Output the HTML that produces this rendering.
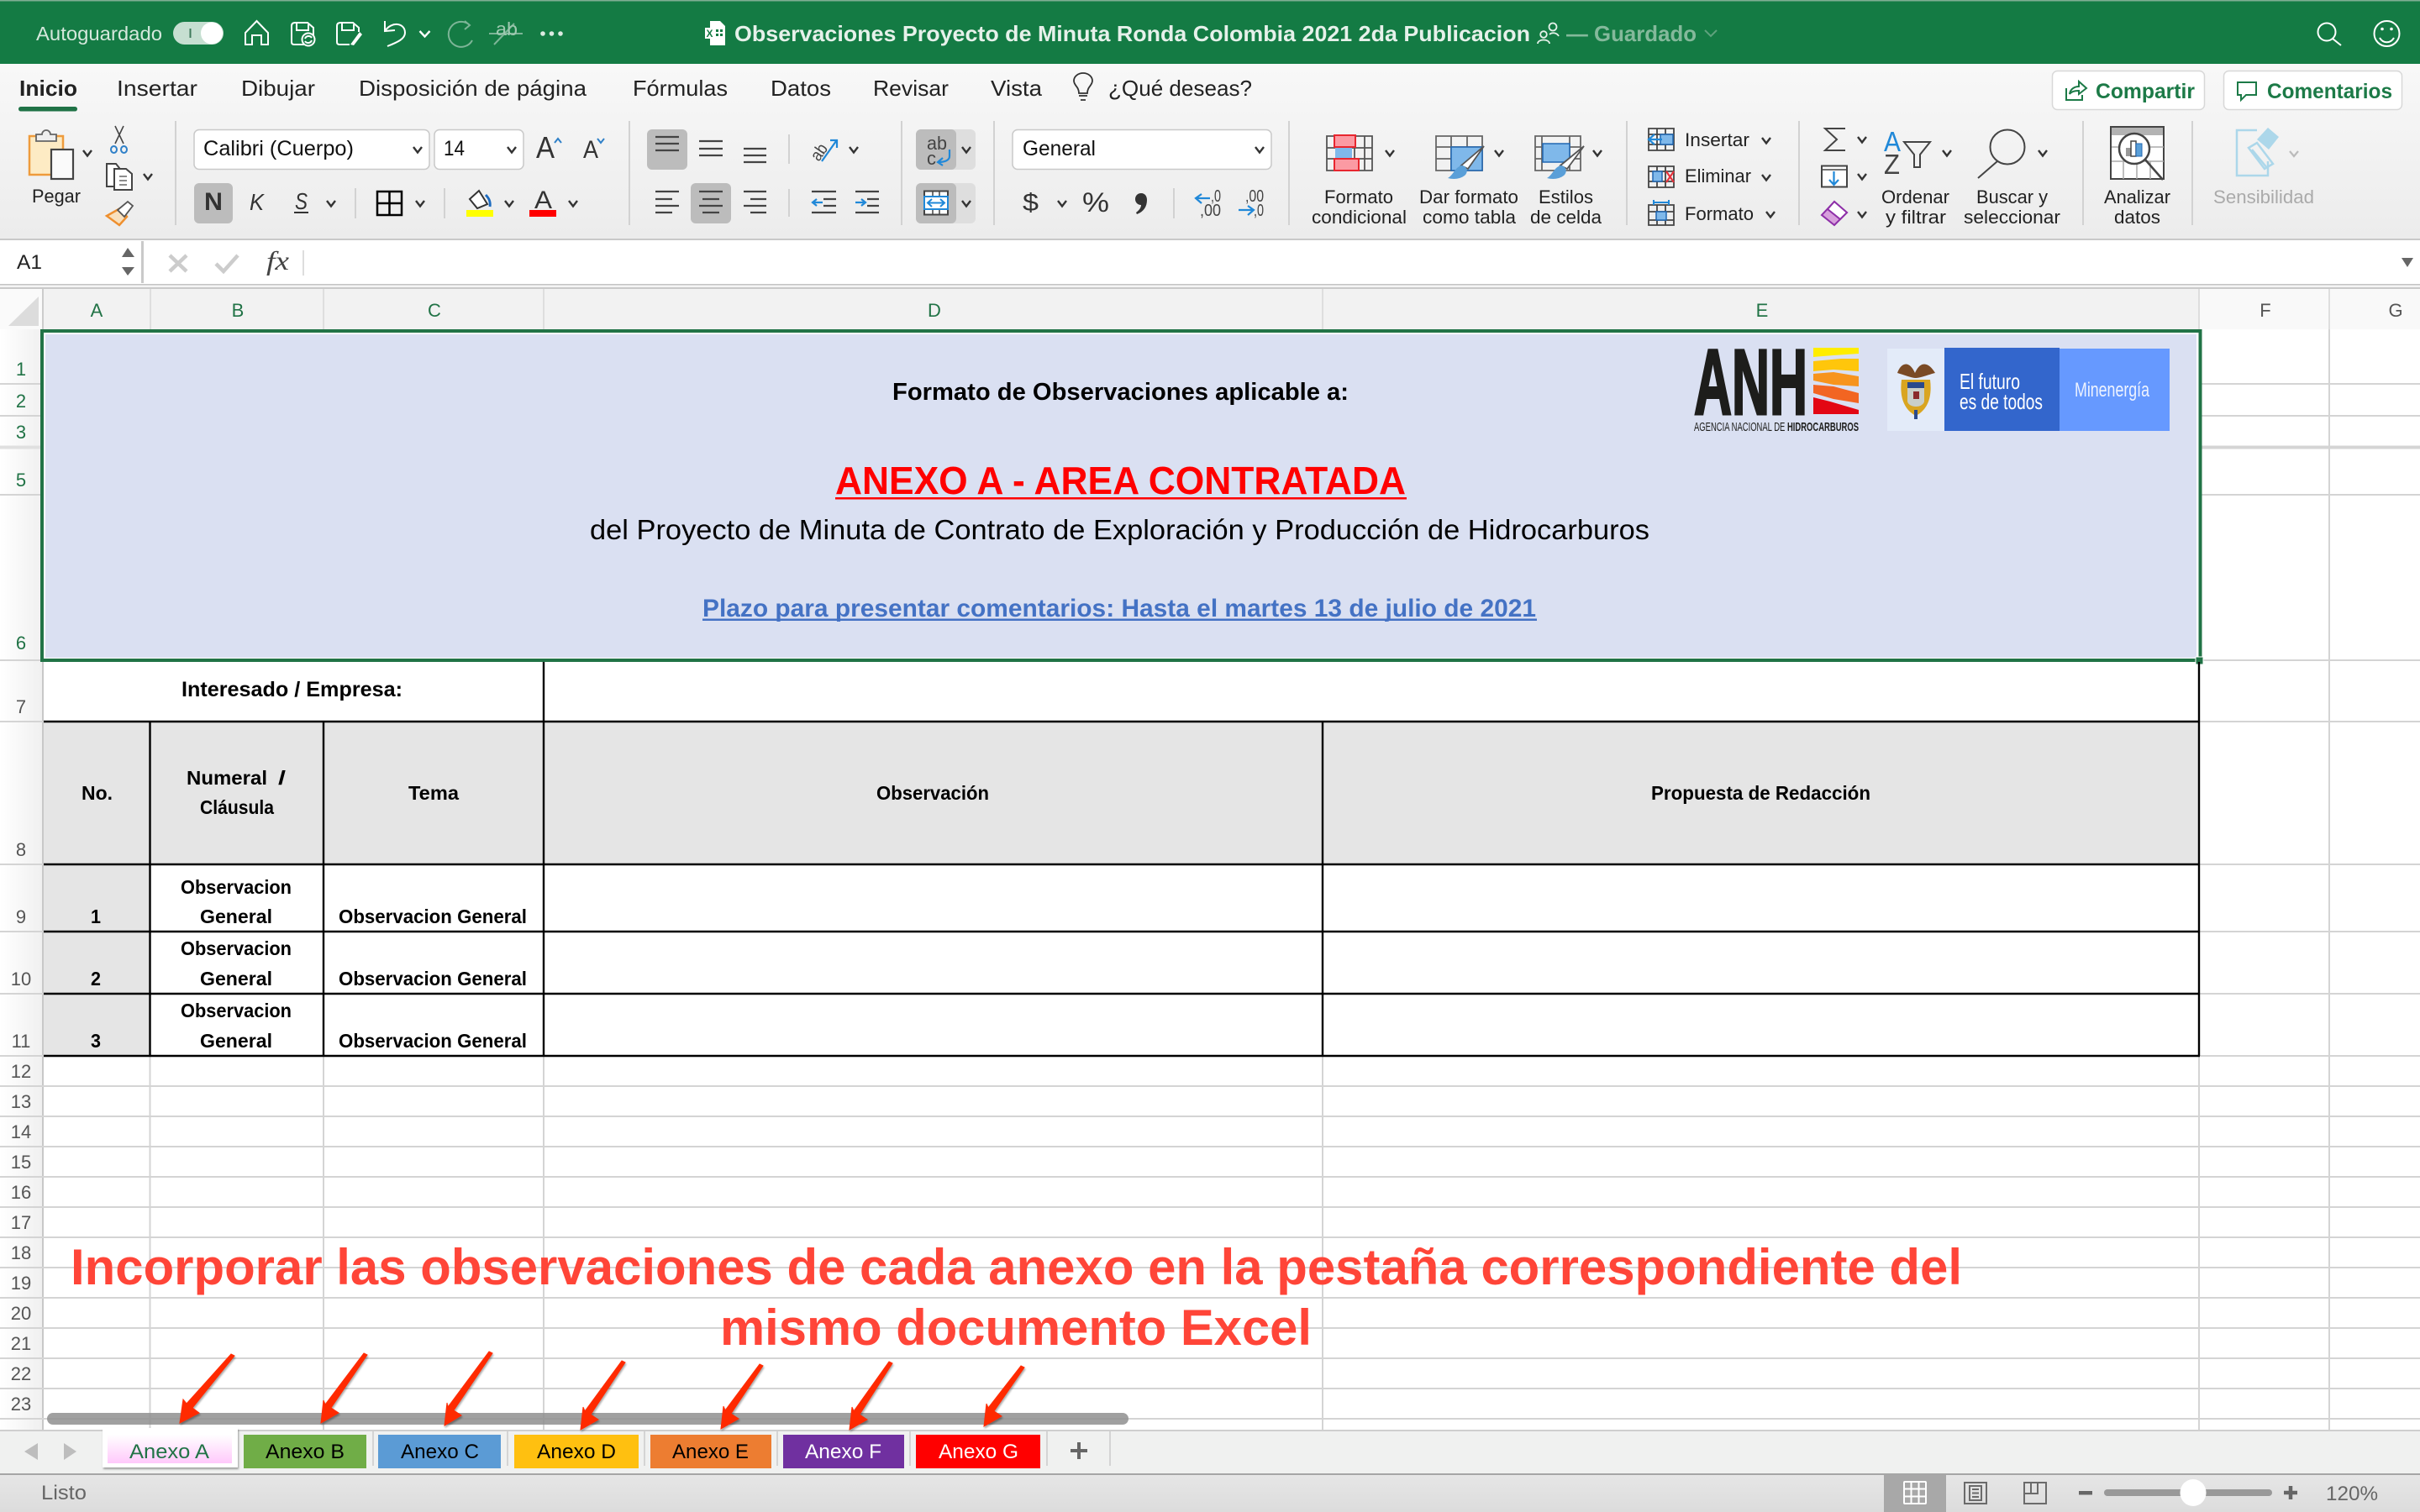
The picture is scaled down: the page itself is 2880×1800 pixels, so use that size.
<!DOCTYPE html>
<html lang="es"><head><meta charset="utf-8"><title>Excel</title>
<style>
html,body{margin:0;padding:0;background:#fff;width:2880px;height:1800px;overflow:hidden}
svg{display:block;font-family:"Liberation Sans",Arial,sans-serif}
.b{font-weight:700}
</style></head><body>
<svg width="2880" height="1800" viewBox="0 0 2880 1800" xmlns="http://www.w3.org/2000/svg">
<defs>
<linearGradient id="rib" x1="0" y1="0" x2="0" y2="1"><stop offset="0" stop-color="#f8f8f8"/><stop offset="1" stop-color="#ececec"/></linearGradient>
<linearGradient id="rowh" x1="0" y1="0" x2="1" y2="0"><stop offset="0" stop-color="#ffffff"/><stop offset="1" stop-color="#f0f0f0"/></linearGradient>
<linearGradient id="pink" x1="0" y1="0" x2="0" y2="1"><stop offset="0" stop-color="#ffffff"/><stop offset="1" stop-color="#ffc9fb"/></linearGradient>
<linearGradient id="stat" x1="0" y1="0" x2="0" y2="1"><stop offset="0" stop-color="#e6e6e6"/><stop offset="1" stop-color="#dcdcdc"/></linearGradient>
<path id="car" d="M-5-3 L0 3.5 L5-3" fill="none" stroke="#333" stroke-width="2.4"/>
<filter id="ash" x="-30%" y="-30%" width="160%" height="160%"><feDropShadow dx="1" dy="2" stdDeviation="1" flood-color="#000" flood-opacity=".35"/></filter>
</defs>

<!-- title bar -->
<rect width="2880" height="76" fill="#147b44"/>
<rect width="2880" height="1.5" fill="#7fae93"/>
<text x="43" y="48" font-size="23" fill="#d5e8dc" textLength="150" lengthAdjust="spacingAndGlyphs">Autoguardado</text>
<rect x="206" y="26" width="60" height="27" rx="13.5" fill="#c6dfd1"/>
<rect x="225.500" y="34" width="2" height="11" fill="#3f7a5b"/>
<circle cx="252" cy="39.500" r="13" fill="#fff"/>
<g fill="none" stroke="#fff" stroke-width="2">
<path d="M292 53V39L305.500 25 319 39V53H311V42H300V53Z"/>
<path d="M347 31Q347 27 351 27H366L373 33V50Q373 53 370 53H350Q347 53 347 50Z M353 27V36H367V29"/>
<circle cx="367" cy="47" r="7.500" fill="#147b44"/>
<path d="M363 46A4.500 4.500 0 0 1 371 45M371 48A4.500 4.500 0 0 1 363 49"/>
<path d="M401 31Q401 27 405 27H420L427 33V38M401 31V50Q401 53 404 53H416M407 27V36H421V29"/>
<path d="M458 25V37L470 36M458 37C466 25 482 27 482 39C482 46 474 50 461 55" stroke-width="2"/>
</g>
<path d="M417 53L428 38 431 41 421 54Z" fill="#fff"/>
<g fill="none" stroke="#7db597" stroke-width="2">
<path d="M558 29A15 15 0 1 0 562 48M553 25L559 30 553 35"/>
<path d="M582 40H622M588 53L612 28"/>
</g>
<text x="590" y="42" font-size="22" fill="#9fc9b1" textLength="26" lengthAdjust="spacingAndGlyphs">ab</text>
<path d="M499.500 37 L505.500 43.500 L511.500 37" fill="none" stroke="#fff" stroke-width="2.400"/>
<g fill="#dcebe2"><circle cx="646" cy="40" r="2.800"/><circle cx="656.500" cy="40" r="2.800"/><circle cx="667" cy="40" r="2.800"/></g>
<path d="M845 25H857L863 31V54H845V46H839V33H845Z" fill="#fff"/>
<text x="840.500" y="44" font-size="12" class="b" fill="#147b44">X</text>
<g fill="#147b44"><rect x="852" y="35" width="3" height="3"/><rect x="857" y="35" width="3" height="3"/><rect x="852" y="40" width="3" height="3"/><rect x="857" y="40" width="3" height="3"/></g>
<text x="874" y="49" font-size="26" class="b" fill="#e6f1ea" textLength="947" lengthAdjust="spacingAndGlyphs">Observaciones Proyecto de Minuta Ronda Colombia 2021 2da Publicacion</text>
<g fill="none" stroke="#e6f1ea" stroke-width="1.800"><circle cx="1837" cy="41" r="3.800"/><path d="M1830 52C1830 46 1844 46 1844 52"/><circle cx="1848" cy="32" r="4.500"/><path d="M1844 41C1847 38 1853 39 1855 43"/></g>
<text x="1864" y="49" font-size="26" class="b" fill="#84b99b" textLength="155" lengthAdjust="spacingAndGlyphs">— Guardado</text>
<path d="M2029 36L2036 43 2043 36" fill="none" stroke="#5fa27d" stroke-width="2"/>
<g fill="none" stroke="#fff" stroke-width="2"><circle cx="2769" cy="38" r="10.500"/><path d="M2776 46L2786 54"/><circle cx="2840.500" cy="40" r="15"/><path d="M2832 45C2836 52 2845 52 2849 45"/></g>
<circle cx="2835" cy="34.500" r="1.800" fill="#fff"/><circle cx="2846" cy="34.500" r="1.800" fill="#fff"/>

<!-- ribbon -->
<rect y="76" width="2880" height="208" fill="url(#rib)"/>
<g fill="#222" font-size="26">
<text x="23" y="114" class="b" textLength="69" lengthAdjust="spacingAndGlyphs" font-size="26">Inicio</text>
<text x="139" y="114" textLength="96" lengthAdjust="spacingAndGlyphs">Insertar</text>
<text x="287" y="114" textLength="88" lengthAdjust="spacingAndGlyphs">Dibujar</text>
<text x="427" y="114" textLength="271" lengthAdjust="spacingAndGlyphs">Disposición de página</text>
<text x="753" y="114" textLength="113" lengthAdjust="spacingAndGlyphs">Fórmulas</text>
<text x="917" y="114" textLength="72" lengthAdjust="spacingAndGlyphs">Datos</text>
<text x="1039" y="114" textLength="90" lengthAdjust="spacingAndGlyphs">Revisar</text>
<text x="1179" y="114" textLength="61" lengthAdjust="spacingAndGlyphs">Vista</text>
<text x="1319" y="114" textLength="171" lengthAdjust="spacingAndGlyphs">¿Qué deseas?</text>
</g>
<rect x="22" y="127" width="70" height="5.500" rx="2.700" fill="#1f7246"/>
<g fill="none" stroke="#333" stroke-width="1.800"><path d="M1284 111C1284 103 1278 102 1278 96A11 9 0 0 1 1300 96C1300 102 1294 103 1294 111Z"/><path d="M1284 114H1294M1286 119H1292"/></g>

<!-- Compartir / Comentarios -->
<rect x="2442.500" y="84.500" width="181" height="46" rx="6" fill="#fff" stroke="#d8d8d8" stroke-width="1.500"/>
<rect x="2646.500" y="84.500" width="212" height="46" rx="6" fill="#fff" stroke="#d8d8d8" stroke-width="1.500"/>
<g fill="none" stroke="#1c7a47" stroke-width="2"><path d="M2459 105V119H2478V113M2463 112C2464 105 2470 103 2474 103V97L2483 105 2474 112V108C2470 108 2465 109 2463 112Z"/><path d="M2663 98H2685V113H2673L2667 119V113H2663Z"/></g>
<text x="2494" y="117" font-size="25" class="b" fill="#1c7a47" textLength="118" lengthAdjust="spacingAndGlyphs">Compartir</text>
<text x="2698" y="117" font-size="25" class="b" fill="#1c7a47" textLength="149" lengthAdjust="spacingAndGlyphs">Comentarios</text>

<!-- group separators -->
<g stroke="#d2d2d2" stroke-width="2"><path d="M209 144V268M749 144V268M1073 144V268M1183 144V268M1534 144V268M1936 144V268M2141 144V268M2479 144V268M2609 144V268M939 160V195M939 225V258M423 224V260M529 224V260M1397 224V260"/></g>

<!-- clipboard -->
<rect x="35" y="162" width="40" height="46" fill="#fdebc4" stroke="#ee9b3c" stroke-width="2.500"/>
<path d="M43 168V160H50A5 5 0 0 1 60 160H67V168Z" fill="#eee" stroke="#666" stroke-width="1.800"/>
<rect x="61" y="178" width="26" height="35" fill="#fafafa" stroke="#444" stroke-width="2.200"/>
<use href="#car" x="104" y="182"/>
<text x="38" y="241" font-size="22" fill="#222" textLength="58" lengthAdjust="spacingAndGlyphs">Pegar</text>
<g fill="none" stroke="#444" stroke-width="1.600"><path d="M137 171L147 150M147 171L137 150"/></g>
<g fill="none" stroke="#2f80c8" stroke-width="2"><ellipse cx="135.500" cy="178" rx="3.500" ry="4"/><ellipse cx="147.500" cy="178" rx="3.500" ry="4"/></g>
<g fill="#fff" stroke="#444" stroke-width="2"><path d="M127 195H138L142 200V222H127Z"/><path d="M136 201H150L157 207V226H136Z"/></g>
<path d="M142 210H151M142 215H151M142 220H151" stroke="#666" stroke-width="1.500"/>
<use href="#car" x="176" y="210"/>
<path d="M127 257L143 248 151 258 142 268Z" fill="#f9e0bd" stroke="#ee8f2e" stroke-width="2.500"/>
<path d="M140 250L152 240 158 245 148 258Z" fill="#fff" stroke="#555" stroke-width="1.800"/>

<!-- font boxes -->
<g fill="#fff" stroke="#c9c9c9" stroke-width="1.500"><rect x="231" y="154.500" width="280" height="47" rx="6"/><rect x="517" y="154.500" width="106" height="47" rx="6"/><rect x="1205" y="154.500" width="308" height="47" rx="6"/></g>
<text x="242" y="185" font-size="25" fill="#111" textLength="179" lengthAdjust="spacingAndGlyphs">Calibri (Cuerpo)</text>
<use href="#car" x="497" y="178"/>
<text x="528" y="185" font-size="25" fill="#111" textLength="25" lengthAdjust="spacingAndGlyphs">14</text>
<use href="#car" x="609" y="178"/>
<text x="1217" y="185" font-size="25" fill="#111" textLength="87" lengthAdjust="spacingAndGlyphs">General</text>
<use href="#car" x="1499" y="178"/>
<text x="638" y="188" font-size="36" fill="#333" textLength="22" lengthAdjust="spacingAndGlyphs">A</text>
<path d="M660 170L664 165 668 170" fill="none" stroke="#2f80c8" stroke-width="2"/>
<text x="694" y="188" font-size="30" fill="#333" textLength="18" lengthAdjust="spacingAndGlyphs">A</text>
<path d="M711 165L715 170 719 165" fill="none" stroke="#2f80c8" stroke-width="2"/>

<!-- alignment -->
<g fill="#bcbcbc"><rect x="770" y="154" width="48" height="48" rx="6"/><rect x="822" y="218" width="48" height="48" rx="6"/><rect x="231" y="218" width="46" height="48" rx="6"/><rect x="1090" y="154" width="71" height="48" rx="6" fill="#dedede"/><rect x="1090" y="218" width="71" height="48" rx="6" fill="#dedede"/><rect x="1090" y="154" width="48" height="48" rx="6"/><rect x="1090" y="218" width="48" height="48" rx="6"/></g>
<g stroke="#444" stroke-width="2.200"><path d="M780 163H808M780 171H808M780 179H808M832 168H860M832 177H860M832 185H860M885 177H912M885 185H912M885 193H912"/>
<path d="M780 228H808M780 237H800M780 245H808M780 253H800M832 228H860M836 237H856M832 245H860M836 253H856M885 228H912M893 237H912M885 245H912M893 253H912"/>
<path d="M966 228H995M980 237H995M980 245H995M966 253H995M1018 228H1046M1032 237H1046M1032 245H1046M1018 253H1046"/></g>
<g fill="none" stroke="#2088d8" stroke-width="2.200"><path d="M979 241H968M972 237L967 241 972 245"/><path d="M1018 241H1029M1025 237L1030 241 1025 245"/><path d="M978 192L995 168M988 167H996V176"/></g>
<text x="964" y="187" font-size="20" fill="#444" transform="rotate(-55 975 180)" textLength="20" lengthAdjust="spacingAndGlyphs">ab</text>
<use href="#car" x="1016" y="178"/>
<text x="1103" y="178" font-size="22" fill="#444" textLength="24" lengthAdjust="spacingAndGlyphs">ab</text>
<text x="1103" y="196" font-size="22" fill="#444">c</text>
<path d="M1130 178V186C1130 191 1124 193 1117 193M1122 188L1116 193 1122 197" fill="none" stroke="#2088d8" stroke-width="2.200"/>
<use href="#car" x="1150" y="178"/>
<rect x="1100" y="227.500" width="28" height="28" fill="#fff" stroke="#444" stroke-width="2"/>
<path d="M1100 234H1128M1110 228V234M1118 228V234M1100 249H1128M1110 249V255M1118 249V255" stroke="#444" stroke-width="1.500"/>
<rect x="1100" y="234" width="28" height="15" fill="#fff" stroke="#2088d8" stroke-width="2"/>
<path d="M1105 241.500H1123M1109 237L1104 241.500 1109 246M1119 237L1124 241.500 1119 246" fill="none" stroke="#2088d8" stroke-width="2"/>
<use href="#car" x="1150" y="242"/>

<!-- font row 2 -->
<text x="243" y="250" font-size="30" class="b" fill="#333" textLength="22" lengthAdjust="spacingAndGlyphs">N</text>
<text x="297" y="250" font-size="28" font-style="italic" fill="#333" textLength="17" lengthAdjust="spacingAndGlyphs">K</text>
<text x="351" y="249" font-size="28" font-style="italic" fill="#333" textLength="15" lengthAdjust="spacingAndGlyphs">S</text>
<rect x="350" y="252" width="17" height="2" fill="#333"/>
<use href="#car" x="394" y="242"/>
<g fill="none" stroke="#000" stroke-width="2.500"><rect x="449" y="228" width="29" height="28"/><path d="M463.500 228V256M449 242H478"/></g>
<use href="#car" x="500" y="242"/>
<path d="M559 237L570 227 580 243 568 248Z" fill="#fff" stroke="#333" stroke-width="2"/>
<path d="M578 232C582 236 584 240 583 246" fill="none" stroke="#1e6cc0" stroke-width="3"/>
<rect x="555" y="250" width="32" height="8" fill="#ffff00"/>
<use href="#car" x="606" y="242"/>
<text x="636" y="248" font-size="30" fill="#333" textLength="21" lengthAdjust="spacingAndGlyphs">A</text>
<rect x="630" y="250" width="32" height="8" fill="#ff0000"/>
<use href="#car" x="682" y="242"/>

<!-- number -->
<text x="1217" y="251" font-size="30" fill="#333" textLength="19" lengthAdjust="spacingAndGlyphs">$</text>
<use href="#car" x="1264" y="242"/>
<text x="1288" y="252" font-size="32" fill="#333" textLength="32" lengthAdjust="spacingAndGlyphs">%</text>
<path d="M1358 230C1363 230 1365 234 1365 238C1365 246 1361 252 1353 255L1352 253C1356 250 1358 247 1358 244C1354 244 1351 241 1351 237C1351 233 1354 230 1358 230Z" fill="#333"/>
<g font-size="20" fill="#444"><text x="1441" y="240" textLength="12" lengthAdjust="spacingAndGlyphs">,0</text><text x="1428" y="257" textLength="25" lengthAdjust="spacingAndGlyphs">,00</text><text x="1482" y="240" textLength="22" lengthAdjust="spacingAndGlyphs">,00</text><text x="1492" y="257" textLength="12" lengthAdjust="spacingAndGlyphs">,0</text></g>
<g fill="none" stroke="#2088d8" stroke-width="2.200"><path d="M1440 236H1424M1430 231L1423 236 1430 242"/><path d="M1474 250H1491M1485 245L1492 250 1485 256"/></g>

<!-- Formato condicional -->
<g fill="none" stroke="#555" stroke-width="1.800"><path d="M1579 162H1633V203H1579Z M1590 162V203M1612 162V203M1624 162V203M1579 176H1633M1579 189H1633" /></g>
<rect x="1588" y="161" width="25" height="14" fill="#fb9aa3" stroke="#e8262f" stroke-width="2"/>
<rect x="1589" y="176" width="20" height="13" fill="#7fb8ea"/>
<rect x="1588" y="189" width="29" height="14" fill="#fb9aa3" stroke="#e8262f" stroke-width="2"/>
<use href="#car" x="1654" y="182"/>
<g fill="none" stroke="#666" stroke-width="1.800"><path d="M1709 162H1764V203H1709Z M1727 162V203M1746 162V203M1709 175H1764M1709 189H1764"/><path d="M1827 162H1881V203H1827Z M1835 162V203M1868 162V203M1827 175H1881M1827 189H1881"/></g>
<rect x="1727" y="175" width="37" height="28" fill="#7fb8ea" stroke="#2067b2" stroke-width="1.500"/>
<rect x="1836" y="171" width="32" height="22" fill="#7fb8ea" stroke="#2067b2" stroke-width="1.500"/>
<g stroke="#555" stroke-width="1.800" fill="#fff"><path d="M1766 174L1747 201 1739 197Z"/><path d="M1885 174L1865 201 1857 197Z"/></g>
<path d="M1739 197C1746 197 1748 205 1743 209 1738 213 1730 214 1723 212 1730 208 1731 200 1739 197Z" fill="#5a9fd8"/>
<path d="M1857 197C1864 197 1866 205 1861 209 1856 213 1848 214 1841 212 1848 208 1849 200 1857 197Z" fill="#5a9fd8"/>
<use href="#car" x="1784" y="182"/><use href="#car" x="1901" y="182"/>
<g font-size="22" fill="#222">
<text x="1576" y="242" textLength="82" lengthAdjust="spacingAndGlyphs">Formato</text>
<text x="1561" y="266" textLength="113" lengthAdjust="spacingAndGlyphs">condicional</text>
<text x="1689" y="242" textLength="118" lengthAdjust="spacingAndGlyphs">Dar formato</text>
<text x="1693" y="266" textLength="111" lengthAdjust="spacingAndGlyphs">como tabla</text>
<text x="1831" y="242" textLength="65" lengthAdjust="spacingAndGlyphs">Estilos</text>
<text x="1821" y="266" textLength="85" lengthAdjust="spacingAndGlyphs">de celda</text>
<text x="2005" y="174" textLength="77" lengthAdjust="spacingAndGlyphs">Insertar</text>
<text x="2005" y="217" textLength="79" lengthAdjust="spacingAndGlyphs">Eliminar</text>
<text x="2005" y="262" textLength="82" lengthAdjust="spacingAndGlyphs">Formato</text>
<text x="2239" y="242" textLength="81" lengthAdjust="spacingAndGlyphs">Ordenar</text>
<text x="2244" y="266" textLength="72" lengthAdjust="spacingAndGlyphs">y filtrar</text>
<text x="2352" y="242" textLength="85" lengthAdjust="spacingAndGlyphs">Buscar y</text>
<text x="2337" y="266" textLength="115" lengthAdjust="spacingAndGlyphs">seleccionar</text>
<text x="2504" y="242" textLength="79" lengthAdjust="spacingAndGlyphs">Analizar</text>
<text x="2516" y="266" textLength="55" lengthAdjust="spacingAndGlyphs">datos</text>
</g>
<text x="2634" y="242" font-size="22" fill="#aaa" textLength="120" lengthAdjust="spacingAndGlyphs">Sensibilidad</text>

<!-- insert/delete/format icons -->
<g fill="none" stroke="#444" stroke-width="1.800">
<path d="M1962 153H1992V179H1962ZM1972 153V179M1982 153V179M1962 160H1992M1962 172H1992"/>
<path d="M1962 198H1992V223H1962ZM1972 198V223M1982 198V223M1962 204H1992M1962 216H1992"/>
<path d="M1962 244H1992V268H1962ZM1972 244V268M1982 244V268M1962 252H1992M1962 262H1992"/>
</g>
<rect x="1976" y="160" width="15" height="12" fill="#7fb8ea" stroke="#2067b2" stroke-width="1.500"/>
<path d="M1978 166H1963M1969 160L1962 166 1969 172" fill="none" stroke="#2088d8" stroke-width="2.200"/>
<rect x="1967" y="204" width="11" height="12" fill="#7fb8ea" stroke="#2067b2" stroke-width="1.500"/>
<path d="M1983 204L1992 217M1992 204L1983 217" stroke="#e8323c" stroke-width="2.200"/>
<rect x="1971" y="252" width="12" height="10" fill="#7fb8ea" stroke="#2067b2" stroke-width="1.500"/>
<path d="M1968 241H1986M1968 238V244M1986 238V244" stroke="#2088d8" stroke-width="2"/>
<use href="#car" x="2102" y="167"/><use href="#car" x="2102" y="211"/><use href="#car" x="2107" y="255"/>
<!-- sigma etc -->
<path d="M2196 153H2172L2186 166 2172 179H2196" fill="none" stroke="#444" stroke-width="2"/>
<use href="#car" x="2216" y="166"/>
<rect x="2168" y="197.500" width="30" height="25" fill="#fff" stroke="#444" stroke-width="2"/>
<path d="M2168 202H2198" stroke="#444" stroke-width="1.500"/>
<path d="M2182.500 204V220M2177 214L2182.500 220 2188 214" fill="none" stroke="#2088d8" stroke-width="2.200"/>
<use href="#car" x="2216" y="210"/>
<path d="M2183 240L2198 253 2183 268 2168 256Z" fill="#d79fdc" stroke="#8e2fa8" stroke-width="2"/>
<path d="M2183 240L2198 253 2190 261 2175 249Z" fill="#fff" stroke="#8e2fa8" stroke-width="2"/>
<use href="#car" x="2216" y="255"/>
<text x="2242" y="180" font-size="33" fill="#2088d8" textLength="20" lengthAdjust="spacingAndGlyphs">A</text>
<text x="2242" y="207" font-size="33" fill="#444" textLength="19" lengthAdjust="spacingAndGlyphs">Z</text>
<path d="M2266 169H2297L2285 184V199H2278V184Z" fill="none" stroke="#444" stroke-width="2"/>
<use href="#car" x="2317" y="182"/>
<circle cx="2389" cy="175" r="20.500" fill="none" stroke="#444" stroke-width="2"/>
<path d="M2377 192L2354 212" stroke="#444" stroke-width="2"/>
<use href="#car" x="2431" y="182"/>
<!-- analizar -->
<rect x="2512" y="151" width="63" height="62" fill="#fff" stroke="#444" stroke-width="2"/>
<rect x="2513" y="152" width="61" height="9" fill="#b3b3b3"/>
<path d="M2513 175H2575M2513 192H2575M2527 192V213M2543 192V213M2559 192V213" stroke="#aaa" stroke-width="1.500"/>
<circle cx="2540" cy="177" r="18" fill="#fff" stroke="#444" stroke-width="2.500"/>
<path d="M2553 190L2574 214" stroke="#444" stroke-width="2.500"/>
<rect x="2530" y="176" width="6" height="10" fill="#999"/><rect x="2536" y="168" width="6" height="18" fill="#fff" stroke="#444" stroke-width="1.500"/><rect x="2542" y="171" width="7" height="15" fill="#5a9fd8" stroke="#2067b2" stroke-width="1"/>
<!-- sensibilidad -->
<g fill="none" stroke="#acd7ea" stroke-width="2.500"><path d="M2686 155H2662V209H2699V192"/><path d="M2676 176L2686 170 2705 195 2695 201Z M2680 178L2698 200"/></g>
<path d="M2686 166L2699 152 2712 163 2700 178Z" fill="#acd7ea"/>
<path d="M2725 180L2730 186 2735 180" fill="none" stroke="#bbb" stroke-width="2.200"/>

<!-- formula bar -->
<rect y="284" width="2880" height="2.500" fill="#c9c9c9"/>
<rect y="286" width="2880" height="52" fill="#fff"/>
<rect x="0" y="287" width="168" height="50" fill="#fff"/>
<rect x="168" y="287" width="3" height="50" fill="#c9c9c9"/>
<text x="20" y="320" font-size="24" fill="#222" textLength="30" lengthAdjust="spacingAndGlyphs">A1</text>
<path d="M152 295L160 306H145ZM152 328L145 318H160Z" fill="#666"/>
<path d="M202 304L222 323M222 304L202 323" stroke="#ccc" stroke-width="4.500"/>
<path d="M257 314L266 323 283 304" fill="none" stroke="#ccc" stroke-width="4.500"/>
<text x="317" y="321" font-size="32" font-style="italic" font-family="Liberation Serif" fill="#444" textLength="27" lengthAdjust="spacingAndGlyphs">fx</text>
<rect x="360" y="298" width="2" height="30" fill="#ddd"/>
<path d="M2858 307H2872L2865 318Z" fill="#666"/>
<rect y="338" width="2880" height="1.500" fill="#c4c4c4"/><rect y="339.500" width="2880" height="2.500" fill="#f4f4f4"/><rect y="342" width="2880" height="2" fill="#c9c9c9"/>

<!-- column headers -->
<rect y="344" width="2617" height="48" fill="#f2f2f2"/>
<rect x="2617" y="344" width="263" height="48" fill="#f9f9f9"/>
<rect y="344" width="50" height="48" fill="#fafafa"/>
<path d="M10 388L46 353V388Z" fill="#dcdcdc"/>
<rect x="50" y="344" width="2" height="48" fill="#ccc"/>
<g stroke="#dedede" stroke-width="2"><path d="M179 344V392M385 344V392M647 344V392M1574 344V392M2617 344V392M2772 344V392"/></g>
<g font-size="22" fill="#217346" text-anchor="middle">
<text x="115" y="377">A</text><text x="283" y="377">B</text><text x="517" y="377">C</text><text x="1112" y="377">D</text><text x="2097" y="377">E</text></g>
<g font-size="22" fill="#555" text-anchor="middle"><text x="2696" y="377">F</text><text x="2851" y="377">G</text></g>

<!-- grid area -->
<rect x="52" y="392" width="2828" height="1310" fill="#fff"/>
<rect y="392" width="50" height="1310" fill="url(#rowh)"/>
<rect x="50" y="392" width="2" height="1310" fill="#c8c8c8"/>
<g stroke="#d4d4d4" stroke-width="2" fill="none">
<path d="M2772 392V1702M2617 788V1702M1574 1258V1702M647 1258V1702M385 1258V1702M178.500 1258V1702"/>
<path d="M0 457H52M0 495H52M0 532.500H52M0 589H52M0 786H52M0 859H52M0 1029H52M0 1109H52M0 1183H52M0 1257H52"/>
<path d="M2617 457H2880M2617 495H2880M2617 589H2880M2617 786H2880M2617 859H2880M2617 1029H2880M2617 1109H2880M2617 1183H2880M2617 1257H2880"/>
<path d="M0 1293H2880M0 1329H2880M0 1365H2880M0 1401H2880M0 1437H2880M0 1473H2880M0 1509H2880M0 1545H2880M0 1581H2880M0 1617H2880M0 1653H2880M0 1689H2880"/>
</g>
<rect x="0" y="530.500" width="52" height="4" fill="#e0e0e0"/><rect x="2617" y="530.500" width="263" height="4" fill="#d4d4d4"/>

<g font-size="22" fill="#217346" text-anchor="middle"><text x="25" y="447">1</text><text x="25" y="485">2</text><text x="25" y="522">3</text><text x="25" y="579">5</text><text x="25" y="773">6</text></g>
<g font-size="22" fill="#555" text-anchor="middle"><text x="25" y="849">7</text><text x="25" y="1019">8</text><text x="25" y="1099">9</text><text x="25" y="1173">10</text><text x="25" y="1247">11</text><text x="25" y="1283">12</text><text x="25" y="1319">13</text><text x="25" y="1355">14</text><text x="25" y="1391">15</text><text x="25" y="1427">16</text><text x="25" y="1463">17</text><text x="25" y="1499">18</text><text x="25" y="1535">19</text><text x="25" y="1571">20</text><text x="25" y="1607">21</text><text x="25" y="1643">22</text><text x="25" y="1679">23</text></g>

<!-- selected banner -->
<rect x="52" y="396" width="2564" height="388" fill="#fff"/>
<rect x="54" y="398" width="2560" height="385" fill="#dae0f2"/>
<path d="M50 394H2618.500V786H50Z" fill="none" stroke="#217346" stroke-width="4"/>
<rect x="2613" y="782" width="9" height="9" fill="#217346" stroke="#fff" stroke-width="1"/>

<text x="1062" y="476" font-size="29" class="b" fill="#000" textLength="543" lengthAdjust="spacingAndGlyphs">Formato de Observaciones aplicable a:</text>
<text x="994" y="588" font-size="46" class="b" fill="#ff0000" textLength="679" lengthAdjust="spacingAndGlyphs">ANEXO A - AREA CONTRATADA</text>
<rect x="994" y="592" width="680" height="2.500" fill="#ff0000"/>
<text x="702" y="642" font-size="33" fill="#000" textLength="1261" lengthAdjust="spacingAndGlyphs">del Proyecto de Minuta de Contrato de Exploración y Producción de Hidrocarburos</text>
<text x="836" y="734" font-size="30" class="b" fill="#4472c4" textLength="992" lengthAdjust="spacingAndGlyphs">Plazo para presentar comentarios: Hasta el martes 13 de julio de 2021</text>
<rect x="836" y="736.500" width="993" height="2.500" fill="#4472c4"/>

<!-- ANH logo -->
<text x="2016" y="493" font-size="110" class="b" fill="#1d1d1b" stroke="#1d1d1b" stroke-width="3" textLength="135" lengthAdjust="spacingAndGlyphs">ANH</text>
<polygon points="2158,414 2212,414 2212,421 2182,423 2158,425" fill="#ffed00"/>
<polygon points="2158,430 2191,427 2212,427 2212,442 2182,440 2158,442" fill="#ffc60b"/>
<polygon points="2158,445 2182,443 2212,448 2212,460 2182,458 2158,453" fill="#f7941d"/>
<polygon points="2158,458 2182,460 2212,468 2212,480 2182,475 2158,468" fill="#f26522"/>
<polygon points="2158,473 2178,478 2212,488 2212,493 2158,493" fill="#e30613"/>
<text x="2016" y="513" font-size="15" fill="#1d1d1b" textLength="196" lengthAdjust="spacingAndGlyphs">AGENCIA NACIONAL DE <tspan class="b">HIDROCARBUROS</tspan></text>
<rect x="2246" y="415" width="68" height="98" fill="#e3ebf9"/>
<rect x="2314" y="414" width="137" height="99" fill="#3366cc"/>
<rect x="2451" y="415" width="131" height="98" fill="#6699ff"/>
<text x="2332" y="463" font-size="26" fill="#fff" textLength="72" lengthAdjust="spacingAndGlyphs">El futuro</text>
<text x="2332" y="487" font-size="26" fill="#fff" textLength="99" lengthAdjust="spacingAndGlyphs">es de todos</text>
<text x="2469" y="472" font-size="24" fill="#eef3ff" textLength="89" lengthAdjust="spacingAndGlyphs">Minenergía</text>
<path d="M2258 444C2262 432 2272 428 2279 444 2286 428 2296 432 2303 444 2295 446 2285 450 2280 450 2275 450 2265 446 2258 444Z" fill="#7a4a25"/>
<path d="M2263 452H2297C2299 468 2297 486 2280 495 2263 486 2261 468 2263 452Z" fill="#d9a520"/>
<path d="M2270 455H2290V478C2288 486 2272 486 2270 478Z" fill="#c9cfc8"/>
<rect x="2270" y="455" width="20" height="7" fill="#2a4a8c"/>
<rect x="2277" y="466" width="7" height="9" fill="#8a2a2a"/>
<rect x="2278" y="488" width="4" height="11" fill="#2a4a8c"/>

<!-- table -->
<rect x="52" y="860" width="2565" height="169" fill="#e5e5e5"/>
<rect x="52" y="1030" width="126" height="227" fill="#e5e5e5"/>
<g stroke="#000" stroke-width="2.400" fill="none">
<path d="M52 859H2618M52 1029H2618M52 1109H2618M52 1183H2618M52 1257H2618"/>
<path d="M178.500 859V1257M385 859V1257M647 788V1257M1574 859V1257M2617 788V1257"/>
</g>
<g class="b" font-size="23" fill="#000" font-weight="700">
<text x="216" y="829" font-size="25" textLength="263" lengthAdjust="spacingAndGlyphs">Interesado / Empresa:</text>
<text x="97" y="952" textLength="37" lengthAdjust="spacingAndGlyphs">No.</text>
<text x="222" y="934" textLength="96" lengthAdjust="spacingAndGlyphs">Numeral</text>
<text x="331" y="934" textLength="9" lengthAdjust="spacingAndGlyphs">/</text>
<text x="238" y="969" textLength="88" lengthAdjust="spacingAndGlyphs">Cláusula</text>
<text x="486" y="952" textLength="60" lengthAdjust="spacingAndGlyphs">Tema</text>
<text x="1043" y="952" textLength="134" lengthAdjust="spacingAndGlyphs">Observación</text>
<text x="1965" y="952" textLength="261" lengthAdjust="spacingAndGlyphs">Propuesta de Redacción</text>
<text x="108" y="1099" textLength="12" lengthAdjust="spacingAndGlyphs">1</text>
<text x="108" y="1173" textLength="12" lengthAdjust="spacingAndGlyphs">2</text>
<text x="108" y="1247" textLength="12" lengthAdjust="spacingAndGlyphs">3</text>
<text x="215" y="1064" textLength="132" lengthAdjust="spacingAndGlyphs">Observacion</text>
<text x="238" y="1099" textLength="86" lengthAdjust="spacingAndGlyphs">General</text>
<text x="403" y="1099" textLength="224" lengthAdjust="spacingAndGlyphs">Observacion General</text>
<text x="215" y="1137" textLength="132" lengthAdjust="spacingAndGlyphs">Observacion</text>
<text x="238" y="1173" textLength="86" lengthAdjust="spacingAndGlyphs">General</text>
<text x="403" y="1173" textLength="224" lengthAdjust="spacingAndGlyphs">Observacion General</text>
<text x="215" y="1211" textLength="132" lengthAdjust="spacingAndGlyphs">Observacion</text>
<text x="238" y="1247" textLength="86" lengthAdjust="spacingAndGlyphs">General</text>
<text x="403" y="1247" textLength="224" lengthAdjust="spacingAndGlyphs">Observacion General</text>
</g>

<!-- annotation -->
<text x="84" y="1529" font-size="60" class="b" fill="#ff4538" textLength="2251" lengthAdjust="spacingAndGlyphs">Incorporar las observaciones de cada anexo en la pestaña correspondiente del</text>
<text x="857" y="1601" font-size="60" class="b" fill="#ff4538" textLength="704" lengthAdjust="spacingAndGlyphs">mismo documento Excel</text>

<!-- scrollbar -->
<rect x="56" y="1682" width="1287" height="14" rx="7" fill="#8f8f8f" fill-opacity=".85"/>

<!-- tab bar -->
<rect y="1702" width="2880" height="53" fill="#f0f1f0"/>
<rect y="1702" width="2880" height="2" fill="#cfcfcf"/>
<rect y="1754" width="2880" height="2" fill="#a6a6a6"/>
<rect y="1756" width="2880" height="44" fill="url(#stat)"/>
<path d="M45 1718V1738L29 1728ZM76 1718V1738L91 1728Z" fill="#bdbdbd"/>
<rect x="122" y="1700" width="161" height="47" fill="#fff" filter="url(#ash)"/>
<rect x="128" y="1708" width="148" height="34" fill="url(#pink)"/>
<g fill="#d4d4d4"><rect x="443" y="1704" width="2" height="41"/><rect x="603" y="1704" width="2" height="41"/><rect x="766" y="1704" width="2" height="41"/><rect x="924" y="1704" width="2" height="41"/><rect x="1082" y="1704" width="2" height="41"/><rect x="1245" y="1704" width="2" height="41"/><rect x="1320" y="1704" width="2" height="41"/></g>
<rect x="290" y="1708" width="146" height="40" fill="#70ad47"/>
<rect x="450" y="1708" width="146" height="40" fill="#5b9bd5"/>
<rect x="612" y="1708" width="148" height="40" fill="#ffc010"/>
<rect x="774" y="1708" width="144" height="40" fill="#ed7d31"/>
<rect x="932" y="1708" width="144" height="40" fill="#7030a0"/>
<rect x="1090" y="1708" width="148" height="40" fill="#ff0000"/>
<g font-size="24">
<text x="154" y="1736" fill="#217346" textLength="95" lengthAdjust="spacingAndGlyphs">Anexo A</text>
<text x="316" y="1736" fill="#000" textLength="94" lengthAdjust="spacingAndGlyphs">Anexo B</text>
<text x="477" y="1736" fill="#000" textLength="93" lengthAdjust="spacingAndGlyphs">Anexo C</text>
<text x="639" y="1736" fill="#000" textLength="94" lengthAdjust="spacingAndGlyphs">Anexo D</text>
<text x="800" y="1736" fill="#000" textLength="91" lengthAdjust="spacingAndGlyphs">Anexo E</text>
<text x="958" y="1736" fill="#fff" textLength="91" lengthAdjust="spacingAndGlyphs">Anexo F</text>
<text x="1117" y="1736" fill="#fff" textLength="95" lengthAdjust="spacingAndGlyphs">Anexo G</text>
</g>
<path d="M1284 1717V1737M1274 1727H1294" stroke="#666" stroke-width="4"/>

<!-- arrows -->
<g fill="#ff2a00" stroke="#ff2a00" stroke-width="1" filter="url(#ash)">
<path d="M275 1612L279 1614 229 1676 237 1682 214 1694 218 1666 222 1671Z"/>
<path d="M433 1611L437 1613 394 1676 403 1682 382 1694 385 1667 387 1672Z"/>
<path d="M582 1609L586 1611 540 1679 549 1685 529 1697 532 1670 533 1675Z"/>
<path d="M740 1620L744 1622 703 1684 712 1690 691 1702 694 1675 696 1680Z"/>
<path d="M904 1624L908 1626 870 1683 879 1689 858 1701 861 1674 863 1679Z"/>
<path d="M1058 1621L1062 1623 1023 1684 1032 1690 1011 1702 1014 1675 1016 1680Z"/>
<path d="M1215 1626L1219 1628 1183 1680 1192 1686 1171 1698 1174 1671 1176 1676Z"/>
</g>

<!-- status bar -->
<text x="49" y="1785" font-size="24" fill="#666" textLength="54" lengthAdjust="spacingAndGlyphs">Listo</text>
<rect x="2242" y="1756" width="74" height="44" fill="#a8a8a8"/>
<rect x="2266" y="1764" width="26" height="26" rx="1" fill="#a8a8a8" stroke="#fff" stroke-width="2"/>
<path d="M2266 1772.500H2292M2266 1781.500H2292M2274.500 1764V1790M2283.500 1764V1790" stroke="#fff" stroke-width="2"/>
<g fill="none" stroke="#6b6b6b" stroke-width="2"><rect x="2338" y="1765" width="26" height="25"/><rect x="2344" y="1769" width="14" height="17"/><path d="M2347 1773H2355M2347 1777.500H2355M2347 1782H2355"/><rect x="2409" y="1765" width="26" height="25"/><path d="M2409 1778H2425V1765M2417 1765V1778"/></g>
<rect x="2474" y="1775" width="16" height="4.500" fill="#666"/>
<rect x="2504" y="1773" width="200" height="8" rx="4" fill="#999"/>
<ellipse cx="2610" cy="1777" rx="15.500" ry="16" fill="#fff"/>
<path d="M2726 1769V1785M2718 1777H2734" stroke="#666" stroke-width="4.500"/>
<text x="2768" y="1786" font-size="24" fill="#666" textLength="62" lengthAdjust="spacingAndGlyphs">120%</text>
</svg>
</body></html>
